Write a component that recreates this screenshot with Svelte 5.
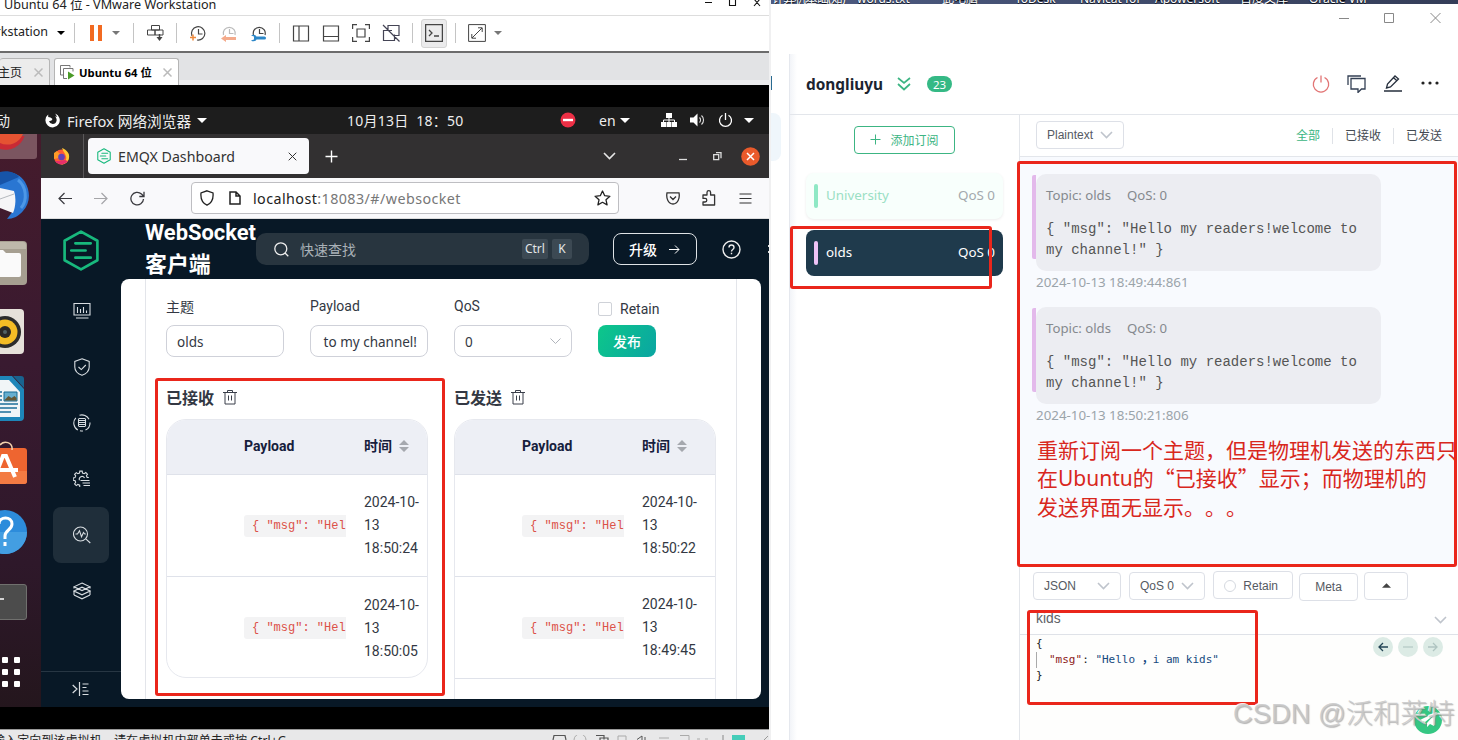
<script lang="ts">
  interface Row {
    payload: string;
    time: string[];
  }

  interface Message {
    topic: string;
    qos: number;
    lines: string[];
    time: string;
  }

  const received: Row[] = [
    { payload: '{ "msg": "Hel', time: ['2024-10-', '13', '18:50:24'] },
    { payload: '{ "msg": "Hel', time: ['2024-10-', '13', '18:50:05'] }
  ];

  const sent: Row[] = [
    { payload: '{ "msg": "Hel', time: ['2024-10-', '13', '18:50:22'] },
    { payload: '{ "msg": "Hel', time: ['2024-10-', '13', '18:49:45'] }
  ];

  const body = ['{ "msg": "Hello my readers!welcome to', 'my channel!" }'];

  const messages: Message[] = [
    { topic: 'olds', qos: 0, lines: body, time: '2024-10-13 18:49:44:861' },
    { topic: 'olds', qos: 0, lines: body, time: '2024-10-13 18:50:21:806' }
  ];

  const notes = [
    '重新订阅一个主题，但是物理机发送的东西只',
    '在Ubuntu的“已接收”显示；而物理机的',
    '发送界面无显示。。。'
  ];

  const desktop = ['计算机基础(知)', 'words.txt', '此电脑', 'ToDesk', 'Navicat for', 'Apowersoft', '百度文库', 'Oracle VM'];

  const menu = [
    'M1 1.5h16v11.500h-16zM4.500 5v6M7.500 7v4M10.500 5v6M13.500 8.500v2.500M3 16h12.500',
    'M9 .8l7.200 2.700v5.500c0 4-3 6.800-7.200 8.300c-4.200-1.500-7.200-4.300-7.200-8.300v-5.500zM5.500 9l2.800 2.600l4.500-4.600',
    'M2.800 3.800a8 8 0 0 0 2 12.200M6.500 1.300a8 8 0 0 1 9.500 4M17 8.500a8 8 0 0 1-4.500 7.500M10 17a8 8 0 0 1-3-.3M6 4.500h6M5.500 6.500h7M5.500 8.500h7M5.500 10.500h7M6 12.500h6M5.500 4.500v8M12.500 4.500v8',
    'M15.800 7.500h-1.600l-.8-1.800l1.100-1.500l-1.700-1.700l-1.600 1.200l-1.700-.7l-.3-1.900h-2.400l-.3 1.900l-1.700.7l-1.500-1.100l-1.700 1.700l1.100 1.600l-.7 1.700l-1.800.3v2.400l1.800.3l.7 1.700l-1.100 1.600l1.700 1.700l1.500-1.200l1.900.8v1.700M6.500 10.300a2.700 2.700 0 1 1 5-2.300M7.500 10.500h9M9.500 13h7.500M10.500 15.500h6.500',
    'M7.500 1a7 7 0 1 1 0 14a7 7 0 1 1 0-14zM12.800 12.800l4.500 4.200M2.500 8h2l2-3.300l2 6l2-4.200l1.300 1.500h1',
    'M9 1l8 3.800l-8 3.800l-8-3.800zM1 9l8-3.800l8 3.800l-8 3.800zM1 13l8 3.800l8-3.800M1 4.800v1.700M17 4.800v1.700M1 9v4M17 9v4'
  ];
</script>

{#snippet trash()}
  <svg class="trash" width="14" height="15" viewBox="0 0 14 15">
    <path d="M0 2.500h14M2 2.500v11.500h10v-11.500M4.500 2.500v-2h5v2M5.500 5.500v5M8.500 5.500v5" fill="none" stroke="#3a3f4a" />
  </svg>
{/snippet}

{#snippet chevron(color)}
  <svg width="13" height="8" viewBox="0 0 13 8">
    <path d="M1 1l5.500 5.500l5.500-5.500" fill="none" stroke={color} stroke-width="1.600" />
  </svg>
{/snippet}

{#snippet caret(color, w)}
  <svg width={w} height={w / 2} viewBox="0 0 10 5"><path d="M0 0h10l-5 5z" fill={color} /></svg>
{/snippet}

{#snippet hexagon(w, h, stroke)}
  <svg width={w} height={h} viewBox="0 0 36 40">
    <path d="M18 1.500l16 9v19l-16 9l-16-9v-19zM12.500 13h15M8.500 20h14M12.500 27h15" fill="none" stroke="#18b97d" stroke-width={stroke} stroke-linejoin="round" stroke-linecap="round" />
  </svg>
{/snippet}

{#snippet table(title, rows, kind)}
  <section class="log {kind}">
    <h3>{title}{@render trash()}</h3>
    <div class="table">
      <div class="row thead">
        <b>Payload</b>
        <b class="time">时间
          <svg width="10" height="12" viewBox="0 0 10 12"><path d="M0 5l5-5l5 5zM0 7l5 5l5-5z" fill="#a5a8ae" /></svg>
        </b>
      </div>
      {#each rows as row}
        <div class="row">
          <code>{row.payload}</code>
          <div class="time">
            {#each row.time as part}<p>{part}</p>{/each}
          </div>
        </div>
      {/each}
    </div>
  </section>
{/snippet}

<div class="screen">
  <div class="vmware">
    <div class="title-bar">
      <span>Ubuntu 64 位 - VMware Workstation</span>
      <svg width="60" height="8" viewBox="0 0 60 8">
        <path d="M0 2.500h7M24.500 -2v7.500h6v-7.500M49 -1l6 7M55 -1l-6 7" fill="none" stroke="#111" stroke-width="1.100" />
      </svg>
    </div>

    <div class="toolbar">
      <span class="menu-text">rkstation</span>
      {@render caret('#000', 8)}
      <i></i>
      <svg width="14" height="16" viewBox="0 0 14 16"><path d="M1 0h4v16h-4zM9 0h4v16h-4z" fill="#f26a21" /></svg>
      {@render caret('#777', 8)}
      <i></i>
      <svg width="17" height="17" viewBox="0 0 17 17">
        <path d="M4.500 .5h8v4.500h-8zM.5 5h7.500v5h-7.500zM8 5h8v5h-8z" fill="#fff" stroke="#444" />
        <path d="M12.500 9v4" stroke="#444" stroke-width="1.500" /><path d="M9.500 12h6l-3 4z" fill="#444" />
      </svg>
      <i></i>
      <svg width="17" height="17" viewBox="0 0 17 17">
        <path d="M3 11a6.700 6.700 0 1 1 5 4M9.500 4v5h4" fill="none" stroke="#444" stroke-width="1.200" />
        <path d="M4 9.500v6M1 12.500h6" stroke="#ef8a3c" stroke-width="1.500" />
      </svg>
      <svg width="17" height="17" viewBox="0 0 17 17">
        <path d="M3.500 10a6 6 0 1 1 11.500 0M9.500 4v4.500h4" fill="none" stroke="#bbb" stroke-width="1.200" />
        <path d="M6 10v2h10v3h-10v2l-5-3.500z" fill="#f4ab8c" />
      </svg>
      <svg width="17" height="17" viewBox="0 0 17 17">
        <path d="M3.500 10a6 6 0 1 1 11.500 0M9.500 4v4.500h4" fill="none" stroke="#444" stroke-width="1.200" />
        <path d="M1 10.500l3 1v3l-3 1c2 1.500 4.500 1 5.500-1h8a1.500 1.500 0 0 0 0-3h-8c-1-2-3.500-2.500-5.500-1z" fill="#2c87c8" />
      </svg>
      <i></i>
      <svg width="18" height="17" viewBox="0 0 18 17"><path d="M1.500 1h15v15h-15zM7 1v15" fill="none" stroke="#444" stroke-width="1.200" /></svg>
      <svg width="18" height="17" viewBox="0 0 18 17"><path d="M1.500 1h15v15h-15zM1.500 11.500h15" fill="none" stroke="#444" stroke-width="1.200" /></svg>
      <svg width="18" height="18" viewBox="0 0 18 18"><path d="M.6 5v-4.400h4.400M13 .6h4.400v4.400M17.400 13v4.400h-4.400M5 17.400h-4.400v-4.400M5 5h8v8h-8z" fill="none" stroke="#444" stroke-width="1.200" /></svg>
      <svg width="18" height="18" viewBox="0 0 18 18"><path d="M6 6v-4.500h11v10h-4M10 6.500h-8.500v10h11v-6M1 1l16.500 16.500" fill="none" stroke="#445" stroke-width="1.200" /></svg>
      <i></i>
      <div class="console">
        <svg width="18" height="18" viewBox="0 0 18 18"><path d="M.6 .6h16.800v16.800h-16.800zM4 6l3 3l-3 3M9 12h5" fill="none" stroke="#444" stroke-width="1.300" /></svg>
      </div>
      <i></i>
      <svg width="18" height="18" viewBox="0 0 18 18"><path d="M.6 .6h16.800v16.800h-16.800zM4 14l10-10M10 3.800h4.200v4.200M3.800 10v4.200h4.200" fill="none" stroke="#444" /></svg>
      {@render caret('#777', 8)}
    </div>

    <div class="vm-tabs">
      <div class="vm-tab home"><span>主页</span>
        <svg width="9" height="9" viewBox="0 0 9 9"><path d="M.5 .5l8 8M8.500 .5l-8 8" stroke="#bbb" stroke-width="1.500" /></svg>
      </div>
      <div class="vm-tab current">
        <svg width="15" height="15" viewBox="0 0 15 15">
          <path d="M3 10h-2.500v-9.500h9.500v2M7 13.500h-3.500v-10h9.500v3" fill="none" stroke="#777" /><path d="M8 6.500l6.500 4l-6.500 4z" fill="#4a9a28" />
        </svg>
        <b>Ubuntu 64 位</b>
        <svg width="9" height="9" viewBox="0 0 9 9"><path d="M.5 .5l8 8M8.500 .5l-8 8" stroke="#bbb" stroke-width="1.500" /></svg>
      </div>
    </div>

    <div class="guest">
      <div class="gnome">
        <span class="activities">动</span>
        <svg width="15" height="15" viewBox="0 0 15 15">
          <path d="M3.200 1.500a7.200 7.200 0 1 0 7-1l2 3.500l-2.200-.8c1.200 1.400 2 3 1.500 4.800a3.900 3.900 0 0 1-7.500 .3l2.500-.8l1-1.500l-2-1.500l-2.300-.5z" fill="#fff" />
        </svg>
        <span class="app-name">Firefox 网络浏览器</span>
        {@render caret('#fff', 10)}
        <span class="clock">10月13日&nbsp; 18：50</span>
        <svg width="16" height="16" viewBox="0 0 16 16"><circle cx="8" cy="8" r="7.500" fill="#ec2f45" /><path d="M3 8h10" stroke="#fff" stroke-width="2.400" /></svg>
        <span>en</span>
        {@render caret('#fff', 10)}
        <svg width="16" height="14" viewBox="0 0 16 14"><path d="M5 0h6v5h-6zM0 9h5v5h-5zM5.500 9h5v5h-5zM11 9h5v5h-5z" fill="#fff" /><path d="M8 5v4M2.500 9v-2h11v2" fill="none" stroke="#fff" /></svg>
        <svg width="16" height="14" viewBox="0 0 16 14"><path d="M0 4.500h3.500l4-4v13l-4-4h-3.500z" fill="#fff" /><path d="M9.500 4.500a3.500 3.500 0 0 1 0 5M11.500 2.500a6 6 0 0 1 0 9" fill="none" stroke="#ddd" stroke-width="1.100" /></svg>
        <svg width="15" height="15" viewBox="0 0 15 15"><path d="M4.500 2.200a6 6 0 1 0 6 0M7.500 0v7" fill="none" stroke="#fff" stroke-width="1.300" /></svg>
        {@render caret('#fff', 10)}
      </div>

      <div class="dock">
        <svg width="41" height="26" viewBox="0 0 41 26">
          <path d="M0 0h37v22a3 3 0 0 1-3 3h-34z" fill="#7b5560" /><path d="M0 2h24.500a20 20 0 0 1-24.500 13z" fill="#c92a35" /><path d="M0 0h23a17 17 0 0 1-23 9z" fill="#e55332" />
        </svg>
        <svg width="41" height="50" viewBox="0 0 41 50">
          <path d="M0 2c10-3 20 1 25 9c6 10 5 22-2 29c-4 5-10 8-16 8l6-8l-13-5z" fill="#2a76d2" />
          <path d="M0 1c9-2 16 1 19 5l-19 8z" fill="#1754a8" />
          <path d="M18 9c8 6 10 20 3 28" fill="none" stroke="#4d97e6" stroke-width="3" />
          <path d="M0 17l14 3c2 6 2 15-1 22l-13-5z" fill="#f6f6f7" /><path d="M0 28l14-5" stroke="#b4b8bd" />
        </svg>
        <svg width="41" height="45" viewBox="0 0 41 45">
          <path d="M0 0h23a4 4 0 0 1 4 4v36a4 4 0 0 1-4 4h-23z" fill="#a69f91" /><path d="M0 1h23a3 3 0 0 1 3 3v4h-26z" fill="#beb8ab" />
          <path d="M0 9h3l3 3h13a2 2 0 0 1 2 2v20a2 2 0 0 1-2 2h-19z" fill="#fafafa" />
        </svg>
        <svg width="41" height="47" viewBox="0 0 41 47">
          <path d="M0 1h20a4 4 0 0 1 4 4v37a4 4 0 0 1-4 4h-20z" fill="#e6e1da" />
          <circle cx="5" cy="24" r="16" fill="#2c2c2c" /><circle cx="5" cy="24" r="12.500" fill="#f4bc25" /><circle cx="5" cy="24" r="6" fill="#2b2826" /><circle cx="5" cy="24" r="2" fill="#526165" />
        </svg>
        <svg width="41" height="46" viewBox="0 0 41 46">
          <path d="M0 1h12l12 13v28a4 4 0 0 1-4 4h-20z" fill="#1e86b9" /><path d="M0 5h9l11 12v25h-20z" fill="#f1f5f7" /><path d="M13 1h8a3 3 0 0 1 3 3v9z" fill="#19638f" />
          <path d="M0 17h2M0 21h2M0 25h2M0 29h18M0 33h17M0 37h11" stroke="#1d6f9b" stroke-width="1.600" /><path d="M4 17h13v9h-13z" fill="#66afd0" stroke="#176b93" /><path d="M4.500 25l4-4l3 2l3-2l2 2v2.500h-12z" fill="#655836" />
        </svg>
        <svg width="41" height="48" viewBox="0 0 41 48">
          <path d="M0 9h24a3 3 0 0 1 3 3v30a3 3 0 0 1-3 3h-24z" fill="#ee6530" /><path d="M0 32h27v10a3 3 0 0 1-3 3h-24z" fill="#f37b43" />
          <path d="M0 6c4-5 13-3 12 5" fill="none" stroke="#f4d2ad" stroke-width="1.500" /><path d="M-4 35l7-18h3l9 21M-2 31h20" fill="none" stroke="#fff" stroke-width="4" />
        </svg>
        <svg width="41" height="45" viewBox="0 0 41 45">
          <circle cx="5" cy="23" r="22" fill="#2d8cdb" /><path d="M0 23h27a22 22 0 0 1-27 21.500z" fill="#439ee2" />
          <path d="M-1 15c0-8 13-8 13 0c0 6-7 6-7 12v3M5 33v4" fill="none" stroke="#fff" stroke-width="3" />
        </svg>
        <svg width="41" height="38" viewBox="0 0 41 38"><path d="M-1 1.500h25a2.500 2.500 0 0 1 2.500 2.500v30a2.500 2.500 0 0 1-2.500 2.500h-25z" fill="#4c4c4c" stroke="#70706e" /><path d="M0 16h4" stroke="#fff" stroke-width="1.500" /></svg>
        <svg width="41" height="34" viewBox="0 0 41 34">
          {#each [2, 14, 26] as y}
            <rect x="2" {y} width="6" height="6" rx="1" fill="#fff" /><rect x="14" {y} width="6" height="6" rx="1" fill="#fff" />
          {/each}
        </svg>
      </div>

      <div class="firefox">
        <div class="ff-tabs">
          <svg width="17" height="17" viewBox="0 0 17 17">
            <circle cx="8.500" cy="9" r="7.500" fill="#ff5a36" /><path d="M9 0c5 2 8 6 7 10c-1 4-4 6.500-8 6.500c4-2 6-5 5-8c-.5-3-3-5-4-8.500z" fill="#ffc734" /><path d="M1 5l3-2l2 2l3 2l-3 3l-5 1z" fill="#ff9b27" /><path d="M2 13c3 4 9 5 13 0l-3-1l-7 1z" fill="#e62f6a" /><circle cx="8.500" cy="9" r="3.300" fill="#6441b9" />
          </svg>
          <div class="ff-tab">
            {@render hexagon(14, 16, 2.8)}
            <span>EMQX Dashboard</span>
            <svg width="9" height="9" viewBox="0 0 9 9"><path d="M.7 .7l7.600 7.600M8.300 .7l-7.600 7.600" stroke="#333" /></svg>
          </div>
          <svg width="13" height="13" viewBox="0 0 13 13"><path d="M6.500 .5v12M.5 6.500h12" stroke="#fff" stroke-width="1.400" /></svg>
          {@render chevron('#e6e6e6')}
          <svg width="9" height="9" viewBox="0 0 9 9"><path d="M0 7.500h8" stroke="#ddd" stroke-width="1.300" /></svg>
          <svg width="9" height="9" viewBox="0 0 9 9"><path d="M.7 2.700h5v5h-5zM3 .7h5v5.500" fill="none" stroke="#ddd" stroke-width="1.300" /></svg>
          <svg width="19" height="19" viewBox="0 0 19 19"><circle cx="9.500" cy="9.500" r="9.300" fill="#e95a2b" /><path d="M6 6l7 7M13 6l-7 7" stroke="#fff" stroke-width="1.500" /></svg>
        </div>

        <div class="ff-nav">
          <svg width="14" height="13" viewBox="0 0 14 13"><path d="M14 6.500h-13M6.500 1l-5.500 5.500l5.500 5.500" fill="none" stroke="#3a3a3f" stroke-width="1.200" /></svg>
          <svg width="14" height="13" viewBox="0 0 14 13"><path d="M0 6.500h13M7.500 1l5.500 5.500l-5.500 5.500" fill="none" stroke="#a5a5a8" stroke-width="1.200" /></svg>
          <svg width="15" height="15" viewBox="0 0 15 15"><path d="M13.500 8a6.300 6.300 0 1 1-2-5l2 2M14 .8v4.700h-4.700" fill="none" stroke="#3a3a3f" stroke-width="1.300" /></svg>
          <div class="url">
            <svg width="14" height="16" viewBox="0 0 14 16"><path d="M7 .8l6 2.200c.5 5-1 10-6 12.200c-5-2.200-6.500-7.200-6-12.200z" fill="none" stroke="#222" stroke-width="1.300" /></svg>
            <svg width="12" height="14" viewBox="0 0 12 14"><path d="M1 1h6l4 4v8h-10zM7 1v4h4" fill="none" stroke="#222" stroke-width="1.500" /></svg>
            <span>localhost<em>:18083/#/websocket</em></span>
            <svg width="17" height="16" viewBox="0 0 17 16"><path d="M8.500 1l2.200 4.700l5.200.6l-3.900 3.500l1.100 5.100l-4.600-2.600l-4.600 2.600l1.100-5.100l-3.900-3.500l5.200-.6z" fill="none" stroke="#222" stroke-width="1.300" stroke-linejoin="round" /></svg>
          </div>
          <svg width="14" height="13" viewBox="0 0 14 13"><path d="M1 .8h12c1 5-1 11-6 11.200c-5-.2-7-6.200-6-11.200zM4 4.500l3 3l3-3" fill="none" stroke="#333" stroke-width="1.300" /></svg>
          <svg width="14" height="16" viewBox="0 0 14 16"><path d="M1 5h4v-2.500a1.800 1.800 0 0 1 3.600 0v2.500h4v10h-11.600v-3h2a1.800 1.800 0 0 0 0-3.600h-2z" fill="none" stroke="#333" stroke-width="1.300" stroke-linejoin="round" /></svg>
          <svg width="13" height="11" viewBox="0 0 13 11"><path d="M.5 1h12M.5 5.500h12M.5 10h12" stroke="#333" stroke-width="1.200" /></svg>
        </div>

        <div class="emqx">
          <aside>
            <div class="logo">{@render hexagon(38, 41, 2.6)}</div>
            <nav>
              {#each menu as d, i}
                <div class="menu-item" class:active={i === 4}>
                  <svg width="18" height="18" viewBox="0 0 18 18"><path {d} fill="none" stroke="#d8dde1" stroke-width="1.100" /></svg>
                </div>
              {/each}
            </nav>
            <div class="collapse">
              <svg width="17" height="14" viewBox="0 0 17 14"><path d="M.7 3l4.300 4l-4.300 4M7.500 0v14M10.500 2h6M10.500 5.500h4M10.500 9h6M10.500 12.500h6" fill="none" stroke="#d8dde1" stroke-width="1.200" /></svg>
            </div>
          </aside>

          <div class="emqx-main">
            <div class="emqx-head">
              <h1>WebSocket<br />客户端</h1>
              <div class="search">
                <svg width="15" height="15" viewBox="0 0 15 15"><path d="M6.800 .8a6 6 0 1 1 0 12a6 6 0 1 1 0-12M11 11l3.300 3.300" fill="none" stroke="#eee" stroke-width="1.300" /></svg>
                <span>快速查找</span>
                <kbd>Ctrl</kbd>
                <kbd class="key">K</kbd>
              </div>
              <button class="upgrade">升级
                <svg width="11" height="9" viewBox="0 0 11 9"><path d="M0 4.500h10M6 .5l4 4l-4 4" fill="none" stroke="#fff" /></svg>
              </button>
              <svg class="help" width="19" height="19" viewBox="0 0 19 19">
                <circle cx="9.500" cy="9.500" r="8.500" fill="none" stroke="#eee" stroke-width="1.400" /><path d="M7 7.500c0-3.300 5-3.300 5 0c0 2-2.500 2-2.500 4M9.500 12.800v1.500" fill="none" stroke="#eee" stroke-width="1.400" />
              </svg>
              <svg class="gear" width="3" height="10" viewBox="0 0 3 10"><path d="M1 1h2v2h-2zM1 7h2v2h-2z" fill="#ddd" /></svg>
            </div>

            <div class="panel">
              <div class="panel-inner">
                <div class="form">
                  <div class="field"><span class="label">主题</span><div class="input">olds</div></div>
                  <div class="field"><span class="label">Payload</span><div class="input end">to my channel!</div></div>
                  <div class="field"><span class="label">QoS</span>
                    <div class="input select">0 <svg width="11" height="7" viewBox="0 0 11 7"><path d="M.5 .5l5 5l5-5" fill="none" stroke="#b0b4bb" /></svg></div>
                  </div>
                  <div class="field">
                    <span class="label retain"><i></i>Retain</span>
                    <button class="publish">发布</button>
                  </div>
                </div>
                <div class="logs">
                  {@render table('已接收', received, 'received')}
                  {@render table('已发送', sent, 'sent')}
                </div>
              </div>
            </div>
          </div>
        </div>
      </div>
    </div>

    <div class="status">
      <span>输入定向到该虚拟机，请在虚拟机内部单击或按 Ctrl+G。</span>
      <svg width="217" height="5" viewBox="0 0 217 5">
        <path d="M1 5l1-4.500h11l1 4.500M44 .5h8v4M48 5v-2h8v2" fill="none" stroke="#555" stroke-width="1.200" />
        <path d="M22 5a6 6 0 0 1 12 0M66 5v-4h8v4M128 .5h9v4.500M107 3h10M145 4h3M153 4h3" fill="none" stroke="#aaa" />
        <path d="M85 4.500l5-3.500v4M93 2v3" fill="none" stroke="#555" /><path d="M171 0v5" stroke="#888" /><path d="M180 0h13v5h-13z" fill="#45cdb9" /><path d="M212 5l4-4" stroke="#999" />
      </svg>
    </div>
  </div>

  <div class="physical">
    <div class="desktop">
      {#each desktop as name}<span>{name}</span>{/each}
    </div>
    <div class="mqttx">
      <div class="rail"><i class="line"></i><i class="slot"></i></div>
      <div class="client">
        <div class="window-buttons">
          <svg width="102" height="12" viewBox="0 0 102 12"><path d="M0 6.500h10M45.500 1.500h9v9h-9zM91.500 1l10 10M101.500 1l-10 10" fill="none" stroke="#888" /></svg>
        </div>
        <div class="conn-head">
          <h2>dongliuyu</h2>
          <svg class="more" width="14" height="14" viewBox="0 0 14 14"><path d="M1 1l6 5l6-5M1 7l6 5.500l6-5.500" fill="none" stroke="#3cb583" stroke-width="1.700" /></svg>
          <span class="count">23</span>
          <div class="actions">
            <svg width="18" height="18" viewBox="0 0 18 18"><path d="M5.500 2.500a7.700 7.700 0 1 0 7 0M9 .5v7" fill="none" stroke="#e27575" stroke-width="1.300" /></svg>
            <svg width="19" height="18" viewBox="0 0 19 18"><path d="M1 10v-9h13M4 3.500h14v10.500h-3.500l-3.500 3.500v-3.500h-7z" fill="none" stroke="#344054" stroke-width="1.300" /></svg>
            <svg width="18" height="17" viewBox="0 0 18 17"><path d="M0 16h18M2.500 13l1-4l7.500-8l3.500 3l-8 8zM9.500 2.800l3.500 3" fill="none" stroke="#262f3d" stroke-width="1.300" /></svg>
            <svg width="18" height="4" viewBox="0 0 18 4"><circle cx="2" cy="2" r="1.600" fill="#222" /><circle cx="9" cy="2" r="1.600" fill="#222" /><circle cx="16" cy="2" r="1.600" fill="#222" /></svg>
          </div>
        </div>

        <div class="conn-body">
          <div class="subs">
            <button class="add">
              <svg width="11" height="11" viewBox="0 0 11 11"><path d="M5.500 .5v10M.5 5.500h10" stroke="#3cb583" /></svg>添加订阅
            </button>
            <div class="sub university"><i></i><span>University</span><em>QoS 0</em></div>
            <div class="sub olds"><i></i><span>olds</span><em>QoS 0</em></div>
          </div>

          <div class="chat">
            <div class="filters">
              <div class="box plaintext">Plaintext {@render chevron('#bfc4cc')}</div>
              <span class="all">全部</span><span>已接收</span><span>已发送</span>
            </div>
            <div class="messages">
              {#each messages as message}
                <div class="message">
                  <div class="bubble">
                    <p class="topic">Topic: {message.topic}<span>QoS: {message.qos}</span></p>
                    {#each message.lines as line}<pre>{line}</pre>{/each}
                  </div>
                  <p class="stamp">{message.time}</p>
                </div>
              {/each}
              <div class="notes">
                {#each notes as note}
                  <p>{#each note.split(/([A-Za-z]+)/) as part, i}<span class:latin={i % 2 === 1}>{part}</span>{/each}</p>
                {/each}
              </div>
            </div>
            <div class="publish-options">
              <div class="box json">JSON {@render chevron('#bfc4cc')}</div>
              <div class="box qos">QoS 0 {@render chevron('#bfc4cc')}</div>
              <div class="box keep"><i></i>Retain</div>
              <div class="box meta">Meta</div>
              <div class="box up"><svg width="9" height="5" viewBox="0 0 10 5"><path d="M0 5h10l-5-5z" fill="#444" /></svg></div>
            </div>
            <div class="topic-input">kids {@render chevron('#bfc4cc')}</div>
            <div class="editor">
              <div class="json-code">
                <pre>&#123;</pre>
                <pre class="guide"><span class="k">"msg"</span>: <span class="v">"Hello <b>，</b>i am kids"</span></pre>
                <pre>&#125;</pre>
              </div>
              <div class="history">
                <svg width="20" height="20" viewBox="0 0 20 20"><circle cx="10" cy="10" r="10" fill="#dcebe5" /><path d="M15 10h-9M10 6l-4 4l4 4" fill="none" stroke="#234555" stroke-width="1.300" /></svg>
                <svg width="20" height="20" viewBox="0 0 20 20"><circle cx="10" cy="10" r="10" fill="#dcebe5" /><path d="M5 10h10" stroke="#b3c8c4" stroke-width="1.200" /></svg>
                <svg width="20" height="20" viewBox="0 0 20 20"><circle cx="10" cy="10" r="10" fill="#dcebe5" /><path d="M5 10h9M10 6l4 4l-4 4" fill="none" stroke="#afc4c1" stroke-width="1.300" /></svg>
              </div>
              <svg class="send" width="28" height="28" viewBox="0 0 28 28"><circle cx="14" cy="14" r="14" fill="#35c783" /><path d="M22 6l-16 8l5 2l9-7l-7 8v4l3-3l4 2z" fill="#fff" /></svg>
            </div>
          </div>
        </div>
      </div>
    </div>
  </div>

  <div class="mark mark-received"></div>
  <div class="mark mark-sub"></div>
  <div class="mark mark-chat"></div>
  <div class="mark mark-editor"></div>
  <div class="watermark">CSDN @沃和莱特</div>
</div>

<style>
  :global(body) {
    margin: 0;
    overflow: hidden;
    background: #fff;
  }

  .screen {
    position: relative;
    display: flex;
    width: 1458px;
    height: 740px;
    overflow: hidden;
    font-family: 'Noto Sans', 'Noto Sans CJK SC', sans-serif;
    color: #222;
  }

  .screen * {
    box-sizing: border-box;
  }

  h1, h2, h3, p, pre {
    margin: 0;
  }

  svg {
    display: block;
    flex: none;
  }

  em {
    font-style: normal;
  }

  button {
    padding: 0;
    font-family: inherit;
  }

  span, b, p, pre, h2, h3 {
    white-space: nowrap;
  }

  /* VMware window */
  .vmware {
    width: 771px;
    flex: none;
    border-right: 2px solid #f0f0f1;
    background: #fff;
  }

  .title-bar {
    display: flex;
    justify-content: space-between;
    height: 16px;
    padding: 0 4px 0 4px;
    border-bottom: 1px solid #ddd;
    overflow: hidden;
    font-size: 12.620px;
    line-height: 9px;
  }

  .toolbar {
    display: grid;
    grid-template-columns: 57px 17px 15px 23px 21px 14px 29px 13px 31px 30px 29px 13px 30px 30px 30px 30px 9px 34px 13px 26px 1fr;
    align-items: center;
    height: 37px;
    padding-bottom: 1px;
    border-bottom: 2px solid #6c6c6c;
    font-size: 12.5px;
  }

  .toolbar > i {
    width: 1px;
    height: 20px;
    background: #c4c4c4;
  }

  .menu-text {
    display: flex;
    justify-content: flex-end;
    padding-right: 9px;
    line-height: 16px;
    margin-top: -2px;
  }

  .console {
    display: flex;
    align-items: center;
    justify-content: center;
    width: 26px;
    height: 29px;
    border: 1px solid #d4d4d4;
    border-radius: 3px;
    background: #ebebec;
  }

  .vm-tabs {
    display: flex;
    gap: 4px;
    height: 32px;
    padding-top: 5px;
    background: linear-gradient(#e2e3e5 27px, #ececee 27px);
    font-size: 12px;
  }

  .vm-tab {
    display: flex;
    align-items: center;
    border: 1px solid #b5b5b5;
    border-bottom: 0;
    border-radius: 3px 3px 0 0;
  }

  .home {
    width: 50px;
    padding-right: 6px;
    justify-content: space-between;
    border-left: 0;
    background: #ececec;
  }

  .home span {
    margin-left: -2px;
  }

  .current {
    width: 125px;
    padding: 0 6px 0 5px;
    gap: 4px;
    background: #fff;
  }

  .current b {
    flex: 1;
    font-size: 11.300px;
    color: #000;
  }

  .guest {
    display: grid;
    grid-template-columns: 41px 728px;
    grid-template-rows: 27px 573px;
    height: 644px;
    padding: 22px 0;
    background: #000;
  }

  .gnome {
    grid-column: 1 / 3;
    display: grid;
    grid-template-columns: 45px 22px 130px 150px 213px 39px 21px 41px 29px 28px 26px 1fr;
    align-items: center;
    padding-bottom: 1px;
    background: #1d1d1d;
    color: #eee;
    font-size: 14px;
    line-height: 20px;
  }

  .gnome span {
    padding-top: 2px;
  }

  .activities {
    margin-left: -4px;
  }

  .app-name {
    font-size: 14.700px;
  }

  .clock {
    letter-spacing: 0.25px;
  }

  .dock {
    display: grid;
    grid-template-rows: 37px 70px 67px 67px 64px 70px 74px 72px 1fr;
    overflow: hidden;
    background: linear-gradient(#451b2c, #391a30 40%, #2e182a 75%, #24161d);
  }

  /* Firefox */
  .firefox {
    display: flex;
    flex-direction: column;
    overflow: hidden;
  }

  .ff-tabs {
    display: grid;
    grid-template-columns: 35px 237px 278px 76px 34px 28px 1fr;
    align-items: center;
    height: 44px;
    padding-left: 12px;
    background: linear-gradient(90deg, transparent 42px, #5a5859 42px, #5a5859 43px, transparent 43px), #323031;
  }

  .ff-tab {
    display: flex;
    align-items: center;
    width: 221px;
    height: 36px;
    padding: 0 12px 0 9px;
    border-radius: 4px;
    background: #f9f9fb;
    font-size: 14.200px;
    color: #333;
  }

  .ff-tab span {
    flex: 1;
    padding-left: 7px;
  }

  .ff-nav {
    display: grid;
    grid-template-columns: 36px 36px 61px 475px 36px 37px 1fr;
    align-items: center;
    height: 41px;
    padding-left: 17px;
    border-bottom: 1px solid #ddd;
    background: #f9f9fb;
  }

  .url {
    display: flex;
    align-items: center;
    width: 428px;
    height: 32px;
    padding: 0 7px 0 8px;
    border: 1px solid #bebec2;
    border-radius: 4px;
    background: #fff;
    font-size: 14.300px;
    letter-spacing: 0.43px;
  }

  .url svg + svg {
    margin-left: 15px;
  }

  .url span {
    flex: 1;
    padding-left: 12px;
  }

  .url em {
    color: #777;
  }

  /* EMQX dashboard */
  .emqx {
    display: flex;
    flex: 1;
    background: #081826;
    font-family: Roboto, 'Noto Sans CJK SC', sans-serif;
  }

  aside {
    display: flex;
    flex-direction: column;
    width: 80px;
  }

  .logo {
    height: 64px;
    padding: 11px 0 0 21px;
  }

  nav {
    flex: 1;
  }

  .menu-item {
    display: flex;
    align-items: center;
    justify-content: center;
    width: 56px;
    height: 56px;
    margin-left: 12px;
    padding-left: 1px;
    border-radius: 8px;
  }

  .active {
    background: #1f2e3a;
  }

  .collapse {
    display: flex;
    justify-content: center;
    height: 36px;
    padding: 10px 2px 0 0;
    border-top: 1px solid #273643;
  }

  .emqx-main {
    width: 648px;
  }

  .emqx-head {
    display: flex;
    align-items: center;
    height: 60px;
    padding-left: 24px;
    color: #fff;
  }

  h1 {
    width: 111px;
    font-size: 21.900px;
    line-height: 32px;
    font-weight: 700;
    white-space: nowrap;
    margin-top: -1px;
  }

  .search {
    display: flex;
    align-items: center;
    width: 333px;
    flex: none;
    height: 32px;
    padding: 0 17px 0 18px;
    border-radius: 10px;
    background: #28353f;
    font-size: 14px;
  }

  .search span {
    flex: 1;
    padding-left: 11px;
    color: #a9b1b7;
  }

  kbd {
    width: 26px;
    height: 20px;
    margin-right: 4px;
    border-radius: 2px;
    background: #3c4953;
    font: 12px/20px 'Noto Sans', sans-serif;
    color: #e3e6e8;
    text-align: center;
  }

  kbd.key {
    width: 20px;
    margin-right: 0;
  }

  .upgrade {
    display: flex;
    align-items: center;
    justify-content: space-between;
    width: 84px;
    flex: none;
    height: 32px;
    margin-left: 24px;
    padding: 0 16px 0 15px;
    border: 1px solid #dfe3e6;
    border-radius: 8px;
    background: none;
    color: #fff;
    font-size: 14px;
    font-weight: 500;
  }

  .help {
    margin-left: 25px;
  }

  .gear {
    margin-left: 26px;
  }

  .panel {
    width: 640px;
    height: 420px;
    padding: 0 24px;
    border-radius: 8px;
    background: #fff;
    overflow: hidden;
  }

  .panel-inner {
    height: 420px;
    padding: 17px 20px 0;
    border: 1px solid #e3e5ea;
    border-width: 0 1px;
    color: #333843;
  }

  .form {
    display: flex;
    gap: 26px;
    height: 98px;
    font-size: 14px;
  }

  .field {
    width: 118px;
  }

  .label {
    display: flex;
    align-items: center;
    height: 20px;
    margin-bottom: 9px;
  }

  .label.retain {
    gap: 8px;
    height: 25px;
    margin-bottom: 4px;
  }

  .retain i {
    width: 14px;
    height: 14px;
    border: 1px solid #cfd2d8;
    border-radius: 2px;
  }

  .input {
    display: flex;
    align-items: center;
    justify-content: space-between;
    height: 32px;
    padding: 1px 10px 0;
    border: 1px solid #cfd1d9;
    border-radius: 8px;
    font-family: 'Noto Sans', sans-serif;
    font-size: 13.500px;
    white-space: nowrap;
  }

  .input.end {
    justify-content: flex-end;
  }

  .publish {
    display: block;
    width: 58px;
    height: 32px;
    border: 0;
    border-radius: 8px;
    background: linear-gradient(120deg, #0dc78a, #0aa5a2);
    color: #fff;
    font-size: 14px;
    font-weight: 500;
  }

  .logs {
    display: flex;
    gap: 26px;
  }

  .log {
    width: 262px;
  }

  h3 {
    display: flex;
    align-items: center;
    gap: 9px;
    height: 24px;
    margin-top: -9px;
    font-size: 16px;
  }

  .table {
    height: 259px;
    margin-top: 10px;
    border: 1px solid #e6e8ee;
    border-radius: 20px;
    overflow: hidden;
  }

  .sent .table {
    height: 290px;
    border-radius: 20px 20px 0 0;
  }

  .row {
    display: grid;
    grid-template-columns: 102px 64px;
    column-gap: 18px;
    align-items: center;
    height: 102px;
    padding-left: 77px;
    border-bottom: 1px solid #dfe2ea;
    font-size: 14px;
    line-height: 23px;
  }

  .received .row:last-child {
    border-bottom: 0;
  }

  .sent .row {
    padding-left: 67px;
  }

  .thead {
    height: 55px;
    padding-bottom: 2px;
    background: #edeff5;
    color: #16203c;
  }

  .thead .time {
    display: flex;
    align-items: center;
    gap: 7px;
  }

  code {
    height: 22px;
    padding-left: 8px;
    border-radius: 3px 0 0 3px;
    background: #f3f3f4;
    font: 12px/22px 'Liberation Mono', monospace;
    color: #dc5148;
    overflow: hidden;
    white-space: pre;
  }

  .status {
    display: flex;
    justify-content: space-between;
    height: 11px;
    padding: 5px 0 0 0;
    border-top: 1px solid #999;
    background: #e8e8e9;
    font-size: 12px;
    line-height: 12px;
    overflow: hidden;
  }

  .status span {
    margin-left: -7px;
    letter-spacing: 0.1px;
  }

  /* MQTTX window */
  .physical {
    flex: 1;
    width: 687px;
  }

  .desktop {
    display: grid;
    grid-template-columns: 85px 85px 73px 65px 75px 85px 69px 1fr;
    height: 4px;
    padding-left: 1px;
    background: linear-gradient(90deg, #4e5c83, #343d58);
    overflow: hidden;
    color: #fff;
    font-size: 12px;
    line-height: 16px;
  }

  .desktop span {
    margin-top: -9px;
    text-shadow: 0 1px 1px #000;
  }

  .desktop span:first-child {
    letter-spacing: -0.8px;
  }

  .mqttx {
    display: flex;
    height: 736px;
    background: #fff;
  }

  .rail {
    display: flex;
    flex-direction: column;
    width: 18px;
  }

  .line {
    width: 1px;
    height: 14px;
    margin-top: 72px;
    background: #286a91;
  }

  .slot {
    width: 10px;
    height: 48px;
    margin-top: 23px;
    border-radius: 0 8px 8px 0;
    background: #eff6fb;
  }

  .client {
    display: flex;
    flex-direction: column;
    width: 669px;
  }

  .window-buttons {
    display: flex;
    justify-content: flex-end;
    height: 50px;
    padding: 8px 17px 0 0;
  }

  .conn-head {
    display: flex;
    align-items: center;
    height: 61px;
    padding: 0 19px 0 16px;
    border-left: 1px solid #e5e8ee;
    border-bottom: 1px solid #e3e6eb;
    background: linear-gradient(90deg, #f2f4f8, #fff 7px);
  }

  h2 {
    width: 91px;
    font: 700 15.400px 'Noto Sans', sans-serif;
    color: #1c2430;
  }

  .count {
    width: 25px;
    height: 16px;
    margin-left: 16px;
    border-radius: 8px;
    background: #35b985;
    color: #fff;
    font-size: 11.500px;
    line-height: 17px;
    text-align: center;
  }

  .actions {
    display: flex;
    flex: 1;
    align-items: center;
    justify-content: flex-end;
    gap: 17.500px;
    margin-top: -1px;
  }

  .actions svg:last-child {
    margin: -2px 0 0 2px;
  }

  .conn-body {
    display: flex;
    flex: 1;
  }

  .subs {
    display: flex;
    flex-direction: column;
    width: 231px;
    padding: 11px 16px 0;
    border-left: 1px solid #e5e8ee;
    border-right: 1px solid #e3e6eb;
    background: linear-gradient(90deg, #f2f4f8, #fff 7px);
  }

  .add {
    display: flex;
    align-items: center;
    justify-content: center;
    gap: 9px;
    width: 101px;
    height: 28px;
    margin: 0 0 19px 48px;
    padding-bottom: 1px;
    border: 1px solid #3cb583;
    border-radius: 4px;
    background: #fff;
    color: #3cb583;
    font-size: 12px;
    white-space: nowrap;
  }

  .sub {
    display: flex;
    align-items: center;
    width: 197px;
    height: 46px;
    margin-bottom: 11px;
    padding: 0 8px 2px;
    border-radius: 8px;
    font-size: 13.400px;
  }

  .sub i {
    width: 4px;
    height: 24px;
    margin: 2px 8px 0 0;
    border-radius: 2px;
    background: #8fe8c5;
  }

  .sub span {
    flex: 1;
  }

  .university {
    background: #f8fffc;
    box-shadow: 0 1px 3px rgba(0, 0, 0, 0.08);
    color: #9be0c4;
  }

  .university em {
    color: #a3a9ad;
  }

  .olds {
    background: #1f3a4c;
    color: #fff;
  }

  .olds i {
    background: #eec2f5;
  }

  .chat {
    display: flex;
    flex-direction: column;
    width: 438px;
  }

  .box {
    display: flex;
    align-items: center;
    justify-content: space-between;
    height: 28px;
    padding: 0 10px;
    border: 1px solid #dde0e7;
    border-radius: 4px;
    background: #fff;
    color: #555a62;
    font: 12px 'Liberation Sans', sans-serif;
    white-space: nowrap;
  }

  .filters {
    display: flex;
    align-items: center;
    height: 42px;
    padding: 0 4px 0 16px;
    border-bottom: 1px solid #e3e6eb;
    color: #444a52;
    font-size: 12px;
  }

  .plaintext {
    width: 88px;
    margin: -1px auto 0 0;
  }

  .filters span {
    margin-top: 1px;
    padding: 0 12px;
    border-left: 1px solid #dfe2e7;
    line-height: 16px;
  }

  .filters .all {
    border: 0;
    color: #3cb583;
  }

  .messages {
    height: 410px;
    padding: 17px 0 0 12px;
    background: #f8fafe;
  }

  .message {
    height: 133px;
  }

  .bubble {
    position: relative;
    width: 345px;
    height: 97px;
    margin-left: 4px;
    padding: 11px 10px;
    border-radius: 10px;
    background: #ecedf2;
  }

  .bubble::before {
    content: '';
    position: absolute;
    left: -4px;
    top: 1px;
    width: 4px;
    height: 84px;
    border-radius: 2px 0 0 2px;
    background: #e3b9eb;
  }

  .topic {
    margin-bottom: 14px;
    color: #85898e;
    font-size: 13.200px;
    line-height: 20px;
  }

  .topic span {
    margin-left: 16px;
  }

  .bubble pre {
    color: #555;
    font: 14px/21px 'Liberation Mono', monospace;
  }

  .stamp {
    margin-left: 4px;
    color: #9ba4aa;
    font-size: 13.350px;
    line-height: 22px;
  }

  .notes {
    margin: -5px 0 0 5px;
    color: #d8271d;
    font-family: 'Noto Sans CJK SC', sans-serif;
    font-size: 21px;
    font-kerning: none;
    text-spacing-trim: space-all;
    line-height: 28px;
  }

  .notes .latin {
    font-family: 'Noto Sans', sans-serif;
  }

  .publish-options {
    display: flex;
    height: 44px;
    padding: 5px 0 0 13px;
  }

  .json {
    width: 88px;
  }

  .qos {
    width: 76px;
    margin-left: 8px;
  }

  .keep {
    width: 80px;
    margin: -1px 6px 0 8px;
    padding: 2px 14px 0 10px;
  }

  .keep i {
    width: 12px;
    height: 12px;
    border: 1px solid #d5d9e0;
    border-radius: 50%;
  }

  .meta {
    width: 59px;
    margin-top: 1px;
    justify-content: center;
  }

  .up {
    width: 44px;
    margin-left: 6px;
    padding-bottom: 2px;
    justify-content: center;
  }

  .topic-input {
    display: flex;
    align-items: center;
    justify-content: space-between;
    height: 24px;
    padding: 0 11px 8px 16px;
    border-bottom: 1px solid #dfe2e8;
    color: #606266;
    font: 13.800px/16px 'Liberation Sans', sans-serif;
  }

  .topic-input :global(svg) {
    margin-top: 2px;
  }

  .editor {
    position: relative;
    display: flex;
    justify-content: space-between;
    flex: 1;
    padding: 1px 15px 0 16px;
    background: #fefefd;
  }

  .json-code pre {
    font: 11px/16px 'DejaVu Sans Mono', 'Noto Sans CJK SC', monospace;
    color: #222;
  }

  .json-code .guide {
    padding-left: 12px;
    border-left: 1px solid #aaa;
  }

  .json-code b {
    font-weight: 700;
  }

  .k {
    color: #8c1a20;
  }

  .v {
    color: #164a80;
  }

  .history {
    display: flex;
    gap: 5px;
    padding-top: 1px;
  }

  .send {
    position: absolute;
    right: 16px;
    top: 71px;
  }

  /* Annotations drawn over both windows */
  .mark {
    position: absolute;
    border: 3px solid #ea261b;
    border-radius: 3px;
  }

  .mark-received {
    left: 155px;
    top: 378px;
    width: 290px;
    height: 318px;
  }

  .mark-sub {
    left: 790px;
    top: 226px;
    width: 202px;
    height: 63px;
  }

  .mark-chat {
    left: 1017px;
    top: 161px;
    width: 440px;
    height: 406px;
  }

  .mark-editor {
    left: 1027px;
    top: 610px;
    width: 231px;
    height: 95px;
  }

  .watermark {
    position: absolute;
    left: 1233px;
    top: 696px;
    font: 27.300px/36px 'Liberation Sans', 'Noto Sans CJK SC', sans-serif;
    font-weight: 300;
    color: rgba(200, 200, 200, 0.85);
    text-shadow: 1px 1px 1px rgba(120, 120, 120, 0.55), -1px -1px 0 rgba(255, 255, 255, 0.9);
    white-space: nowrap;
  }
</style>
